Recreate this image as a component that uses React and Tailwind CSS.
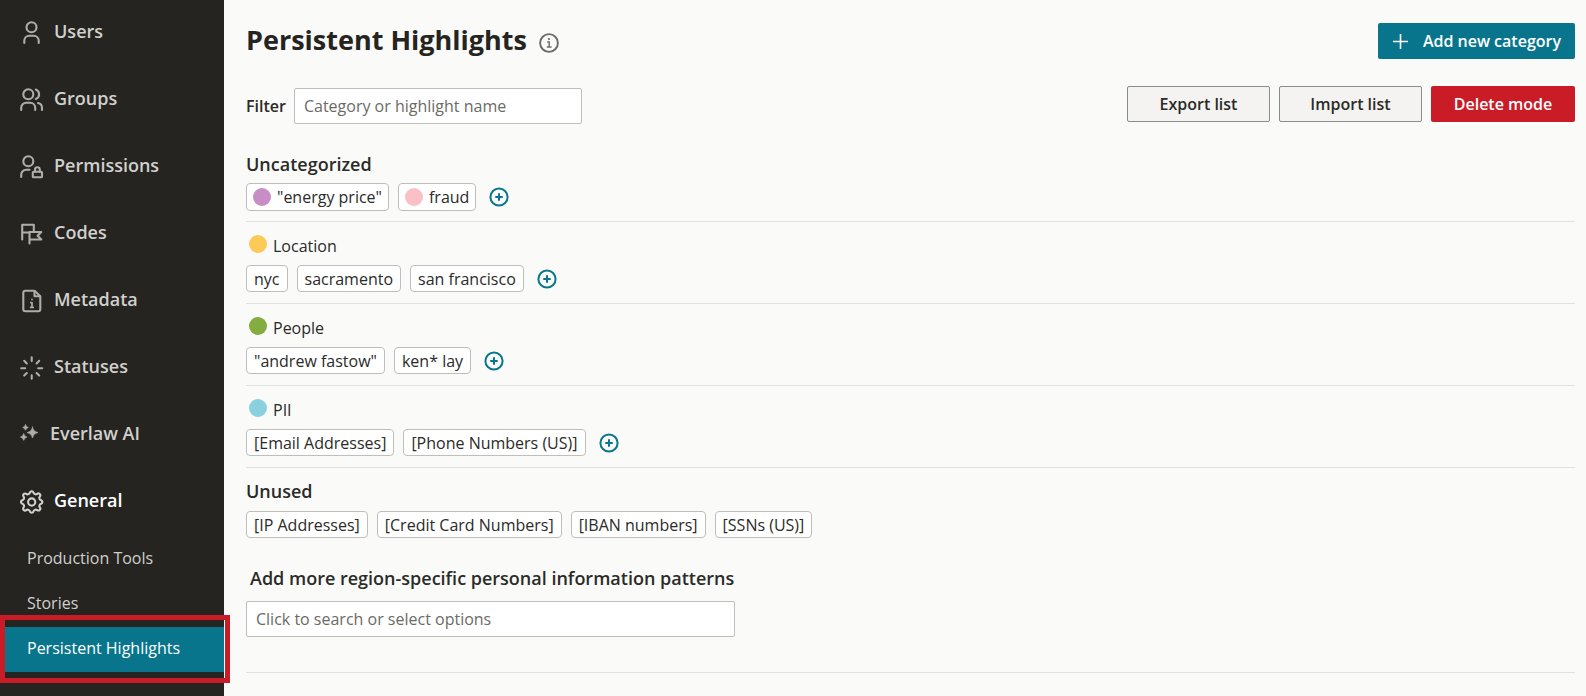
import React, { useState } from "react";

// Icons
function Icon({ children }) {
  return (
    <svg
      viewBox="0 0 24 24"
      fill="none"
      stroke="currentColor"
      strokeWidth="2.1"
      strokeLinecap="round"
      strokeLinejoin="round"
      aria-hidden="true"
      className="w-6 h-6 shrink-0"
    >
      {children}
    </svg>
  );
}

const UserIcon = () => (
  <Icon>
    <circle cx="11.5" cy="6.2" r="5" />
    <path d="M4.3 22v-2.2a5 5 0 0 1 5-5h4.4a5 5 0 0 1 5 5v2.2" />
  </Icon>
);

const GroupIcon = () => (
  <Icon>
    <circle cx="8.3" cy="6.2" r="5" />
    <path d="M1.2 22v-2.2a5 5 0 0 1 5-5h4a5 5 0 0 1 5 5v2.2" />
    <path d="M15.8 1.5a5 5 0 0 1 0 9.4" />
    <path d="M18 15a5 5 0 0 1 4 5v2" />
  </Icon>
);

const PermissionIcon = () => (
  <Icon>
    <circle cx="8.3" cy="6.2" r="5" />
    <path d="M1.2 22v-2.2a5 5 0 0 1 5-5h3.3" />
    <rect x="12.8" y="16.7" width="9.2" height="5.6" rx="0.8" />
    <path d="M15 16.7v-2a2.4 2.4 0 0 1 4.8 0v2" />
  </Icon>
);

const CodesIcon = () => (
  <Icon>
    <path d="M2.2 17.5V2.8h11.6V9.5M2.2 10.5h7.3" />
    <path d="M9.5 21.5V10H21.3l-3.7 3.8 3.7 3.7H9.5" />
  </Icon>
);

const MetadataIcon = () => (
  <Icon>
    <path d="M14.5 1.7H5.3a2 2 0 0 0-2 2v16.6a2 2 0 0 0 2 2h13a2 2 0 0 0 2-2V7.2z" />
    <path d="M14.5 2v5.2h5.5" />
    <path d="M10.8 13.6h1.2v4.8M10.6 18.4h2.6M12 10.4v.1" strokeWidth="1.7" />
  </Icon>
);

const StatusIcon = () => (
  <Icon>
    <path d="M11.7 1.3v3.8M11.7 19.3v3.5M1.2 12.2h4M18.2 12.2h4M4.2 4.8l2.6 2.6M16.6 17l2.6 2.6M4.2 19.6L6.8 17M16.6 7.4l2.6-2.6" />
  </Icon>
);

const SparkleIcon = () => (
  <Icon>
    <g fill="currentColor" strokeWidth="0.6">
      <path d="M12.5 4q.8 4.7 5.5 5.5q-4.7.8-5.5 5.5q-.8-4.7-5.5-5.5q4.7-.8 5.5-5.5z" />
      <path d="M5.5 1.7q.6 2.2 2.8 2.8q-2.2.6-2.8 2.8q-.6-2.2-2.8-2.8q2.2-.6 2.8-2.8z" />
      <path d="M3.7 10.8q.7 2.6 3.3 3.3q-2.6.7-3.3 3.3q-.7-2.6-3.3-3.3q2.6-.7 3.3-3.3z" />
    </g>
  </Icon>
);

const GearIcon = () => (
  <Icon>
    <circle cx="11.7" cy="12" r="3.6" />
    <path d="M9.9 2.6a1.9 1.9 0 0 1 3.6 0a2.4 2.4 0 0 0 3.5 1.4a1.9 1.9 0 0 1 2.7 2.7a2.4 2.4 0 0 0 1.4 3.5a1.9 1.9 0 0 1 0 3.6a2.4 2.4 0 0 0-1.4 3.5a1.9 1.9 0 0 1-2.7 2.7a2.4 2.4 0 0 0-3.5 1.4a1.9 1.9 0 0 1-3.6 0a2.4 2.4 0 0 0-3.5-1.4a1.9 1.9 0 0 1-2.7-2.7a2.4 2.4 0 0 0-1.4-3.5a1.9 1.9 0 0 1 0-3.6a2.4 2.4 0 0 0 1.4-3.5a1.9 1.9 0 0 1 2.7-2.7a2.4 2.4 0 0 0 3.5-1.4z" />
  </Icon>
);

const navItems = [
  { label: "Users", icon: UserIcon },
  { label: "Groups", icon: GroupIcon },
  { label: "Permissions", icon: PermissionIcon },
  { label: "Codes", icon: CodesIcon },
  { label: "Metadata", icon: MetadataIcon },
  { label: "Statuses", icon: StatusIcon },
  { label: "Everlaw AI", icon: SparkleIcon, tight: true },
  { label: "General", icon: GearIcon, active: true }
];

const subItems = ["Production Tools", "Stories", "Persistent Highlights"];

const categories = [
  { name: "Location", color: "bg-[#fdca57]", terms: ["nyc", "sacramento", "san francisco"] },
  { name: "People", color: "bg-[#84ac41]", terms: ['"andrew fastow"', "ken* lay"] },
  { name: "PII", color: "bg-[#8bd0df]", terms: ["[Email Addresses]", "[Phone Numbers (US)]"] }
];

const uncategorized = [
  { text: '"energy price"', color: "bg-[#c98dc5]" },
  { text: "fraud", color: "bg-[#f9c1c6]" }
];

const unused = ["[IP Addresses]", "[Credit Card Numbers]", "[IBAN numbers]", "[SSNs (US)]"];

function Dot({ color }) {
  return <span className={`w-[18px] h-[18px] rounded-full shrink-0 ${color}`} />;
}

function Chip({ text, color }) {
  return (
    <button
      type="button"
      className={`flex items-center gap-1.5 border border-[#bfbfba] rounded bg-white whitespace-nowrap
        ${color ? "h-7 px-1.5" : "h-[27px] px-[7px]"}`}
    >
      {color && <Dot color={color} />}
      {text}
    </button>
  );
}

function AddButton({ label }) {
  return (
    <button type="button" aria-label={label} className="ml-1 text-[#08758c]">
      <svg viewBox="0 0 20 20" fill="none" stroke="currentColor" strokeWidth="2" strokeLinecap="round" className="w-5 h-5">
        <circle cx="10" cy="10" r="8.6" />
        <path d="M10 7v6M7 10h6" />
      </svg>
    </button>
  );
}

function Sidebar() {
  return (
    <nav className="relative w-56 shrink-0 bg-[#252420] text-[#d0d0cd] pt-[17px]">
      <ul className="flex flex-col gap-[39px] pl-5">
        {navItems.map(({ label, icon: NavIcon, tight, active }) => (
          <li key={label}>
            <a
              href="#"
              className={`flex items-center h-7 text-lg font-semibold ${tight ? "gap-1.5" : "gap-2.5"} ${active ? "text-white" : ""}`}
            >
              <span className={`pt-1 ${active ? "text-[#d0d0cd]" : "text-[#adada9]"}`}>
                <NavIcon />
              </span>
              {label}
            </a>
          </li>
        ))}
      </ul>

      <ul className="mt-[23px]">
        {subItems.map((label) => {
          const selected = label === "Persistent Highlights";
          return (
            <li key={label} className="relative">
              <a
                href="#"
                aria-current={selected ? "page" : undefined}
                className={`flex items-center h-[45px] pl-[27px] pb-[3px] ${selected ? "bg-[#08758c] text-white" : ""}`}
              >
                {label}
              </a>
              {selected && (
                <span className="absolute left-0 -right-1.5 -top-3 -bottom-[11px] border-5 border-[#c91c27] pointer-events-none" />
              )}
            </li>
          );
        })}
      </ul>
    </nav>
  );
}

export default function App() {
  const [filter, setFilter] = useState("");
  const [pattern, setPattern] = useState("");

  return (
    <div className="flex min-h-screen bg-[#fafaf8] text-[#2b2b28] text-base font-['Open_Sans',sans-serif]">
      <Sidebar />

      <main className="flex-1 min-w-0 pl-[22px] pr-[11px] pt-[23px]">
        {/* Header */}
        <header className="flex items-center justify-between h-9">
          <div className="flex items-center gap-3">
            <h1 className="text-[27px] leading-8 pb-0.5 font-bold text-[#252420]">Persistent Highlights</h1>
            <button type="button" aria-label="About persistent highlights" className="text-[#6b6b66] pt-1">
              <svg viewBox="0 0 20 20" fill="none" stroke="currentColor" strokeWidth="1.9" strokeLinecap="round" className="w-5 h-5">
                <circle cx="10" cy="10" r="8.9" />
                <path d="M8.7 9h1.5v5M8.3 14h3.8" strokeWidth="1.4" />
                <circle cx="10" cy="6" r="1.1" fill="currentColor" stroke="none" />
              </svg>
            </button>
          </div>
          <button type="button" className="flex items-center gap-3.5 h-9 px-3.5 rounded-xs bg-[#08758c] text-white font-semibold">
            <svg viewBox="0 0 17 17" stroke="currentColor" strokeWidth="1.6" className="w-[17px] h-[17px]">
              <path d="M8.5 1v15M1 8.5h15" />
            </svg>
            Add new category
          </button>
        </header>

        {/* Toolbar */}
        <div className="flex items-start justify-between mt-[27px]">
          <div className="flex items-center gap-2 pt-0.5">
            <label htmlFor="filter" className="font-semibold">Filter</label>
            <input
              id="filter"
              type="text"
              value={filter}
              onChange={(e) => setFilter(e.target.value)}
              placeholder="Category or highlight name"
              className="w-72 h-9 px-[9px] border border-[#bfbfba] rounded-xs bg-white placeholder:text-[#6b6b66]"
            />
          </div>
          <div className="flex gap-[9px] font-semibold">
            <button type="button" className="w-[143px] h-9 border border-[#8c8c88] rounded-xs bg-[#f4f3f1]">Export list</button>
            <button type="button" className="w-[143px] h-9 border border-[#8c8c88] rounded-xs bg-[#f4f3f1]">Import list</button>
            <button type="button" className="w-36 h-9 rounded-xs bg-[#c91c27] text-white">Delete mode</button>
          </div>
        </div>

        {/* Highlights */}
        <section className="mt-7 pb-2.5 border-b border-[#e1e1de]">
          <h2 className="text-lg leading-6 font-semibold">Uncategorized</h2>
          <div className="flex items-center gap-[9px] mt-[7px]">
            {uncategorized.map((item) => (
              <Chip key={item.text} text={item.text} color={item.color} />
            ))}
            <AddButton label="Add highlight" />
          </div>
        </section>

        {categories.map(({ name, color, terms }) => (
          <section key={name} className="pt-[13px] pb-[11px] border-b border-[#e1e1de]">
            <div className="flex items-start gap-1.5 pl-[3px]">
              <Dot color={color} />
              <h3 className="leading-[22px]">{name}</h3>
            </div>
            <div className="flex items-center gap-[9px] mt-2">
              {terms.map((term) => (
                <Chip key={term} text={term} />
              ))}
              <AddButton label={`Add highlight to ${name}`} />
            </div>
          </section>
        ))}

        <section className="pt-[11px] pb-[35px] border-b border-[#e1e1de]">
          <h2 className="text-lg leading-6 font-semibold">Unused</h2>
          <div className="flex items-center gap-[9px] mt-2">
            {unused.map((term) => (
              <Chip key={term} text={term} />
            ))}
          </div>

          <label htmlFor="patterns" className="block mt-7 pl-1 text-lg leading-6 font-semibold">
            Add more region-specific personal information patterns
          </label>
          <input
            id="patterns"
            type="text"
            value={pattern}
            onChange={(e) => setPattern(e.target.value)}
            placeholder="Click to search or select options"
            className="block w-[489px] h-9 mt-[11px] px-[9px] border border-[#bfbfba] rounded-xs bg-white placeholder:text-[#6b6b66]"
          />
        </section>
      </main>
    </div>
  );
}
